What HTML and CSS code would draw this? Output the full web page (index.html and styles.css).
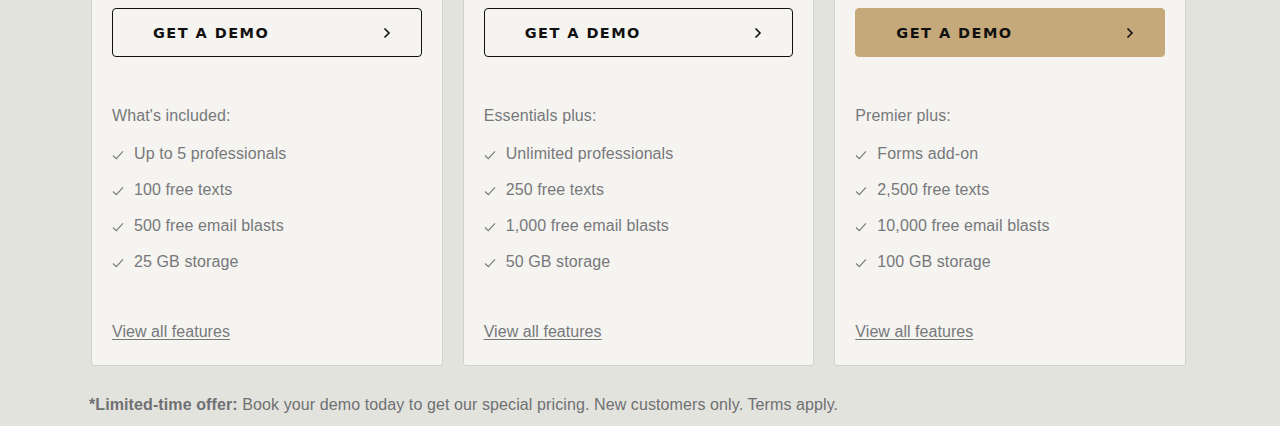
FILE: index.html
```html
<!DOCTYPE html>
<html lang="en">
<head>
<meta charset="utf-8">
<title>Pricing</title>
<link rel="stylesheet" href="styles.css">
</head>
<body>
<main class="page">
  <div class="cards">
    <section class="card">
      <a class="btn" href="#"><span>GET A DEMO</span><svg class="chev" viewBox="0 0 8 12" width="8" height="12"><path d="M1.5 1.5 L6 6 L1.5 10.5" fill="none" stroke="currentColor" stroke-width="1.6"/></svg></a>
      <p class="lead">What's included:</p>
      <ul class="list">
        <li><svg class="check" viewBox="0 0 12 10" width="12" height="10"><path d="M1 5.5 L4.3 8.6 L11 1.4" fill="none" stroke="currentColor" stroke-width="1.1"/></svg>Up to 5 professionals</li>
        <li><svg class="check" viewBox="0 0 12 10" width="12" height="10"><path d="M1 5.5 L4.3 8.6 L11 1.4" fill="none" stroke="currentColor" stroke-width="1.1"/></svg>100 free texts</li>
        <li><svg class="check" viewBox="0 0 12 10" width="12" height="10"><path d="M1 5.5 L4.3 8.6 L11 1.4" fill="none" stroke="currentColor" stroke-width="1.1"/></svg>500 free email blasts</li>
        <li><svg class="check" viewBox="0 0 12 10" width="12" height="10"><path d="M1 5.5 L4.3 8.6 L11 1.4" fill="none" stroke="currentColor" stroke-width="1.1"/></svg>25 GB storage</li>
      </ul>
      <a class="more" href="#">View all features</a>
    </section>
    <section class="card">
      <a class="btn" href="#"><span>GET A DEMO</span><svg class="chev" viewBox="0 0 8 12" width="8" height="12"><path d="M1.5 1.5 L6 6 L1.5 10.5" fill="none" stroke="currentColor" stroke-width="1.6"/></svg></a>
      <p class="lead">Essentials plus:</p>
      <ul class="list">
        <li><svg class="check" viewBox="0 0 12 10" width="12" height="10"><path d="M1 5.5 L4.3 8.6 L11 1.4" fill="none" stroke="currentColor" stroke-width="1.1"/></svg>Unlimited professionals</li>
        <li><svg class="check" viewBox="0 0 12 10" width="12" height="10"><path d="M1 5.5 L4.3 8.6 L11 1.4" fill="none" stroke="currentColor" stroke-width="1.1"/></svg>250 free texts</li>
        <li><svg class="check" viewBox="0 0 12 10" width="12" height="10"><path d="M1 5.5 L4.3 8.6 L11 1.4" fill="none" stroke="currentColor" stroke-width="1.1"/></svg>1,000 free email blasts</li>
        <li><svg class="check" viewBox="0 0 12 10" width="12" height="10"><path d="M1 5.5 L4.3 8.6 L11 1.4" fill="none" stroke="currentColor" stroke-width="1.1"/></svg>50 GB storage</li>
      </ul>
      <a class="more" href="#">View all features</a>
    </section>
    <section class="card">
      <a class="btn btn-gold" href="#"><span>GET A DEMO</span><svg class="chev" viewBox="0 0 8 12" width="8" height="12"><path d="M1.5 1.5 L6 6 L1.5 10.5" fill="none" stroke="currentColor" stroke-width="1.6"/></svg></a>
      <p class="lead">Premier plus:</p>
      <ul class="list">
        <li><svg class="check" viewBox="0 0 12 10" width="12" height="10"><path d="M1 5.5 L4.3 8.6 L11 1.4" fill="none" stroke="currentColor" stroke-width="1.1"/></svg>Forms add-on</li>
        <li><svg class="check" viewBox="0 0 12 10" width="12" height="10"><path d="M1 5.5 L4.3 8.6 L11 1.4" fill="none" stroke="currentColor" stroke-width="1.1"/></svg>2,500 free texts</li>
        <li><svg class="check" viewBox="0 0 12 10" width="12" height="10"><path d="M1 5.5 L4.3 8.6 L11 1.4" fill="none" stroke="currentColor" stroke-width="1.1"/></svg>10,000 free email blasts</li>
        <li><svg class="check" viewBox="0 0 12 10" width="12" height="10"><path d="M1 5.5 L4.3 8.6 L11 1.4" fill="none" stroke="currentColor" stroke-width="1.1"/></svg>100 GB storage</li>
      </ul>
      <a class="more" href="#">View all features</a>
    </section>
  </div>
  <p class="note"><strong>*Limited-time offer:</strong> Book your demo today to get our special pricing. New customers only. Terms apply.</p>
</main>
</body>
</html>
```
FILE: styles.css
```css
* { box-sizing: border-box; }
html, body { margin: 0; padding: 0; }
body {
  background: #e3e3dd;
  font-family: "Liberation Sans", Arial, sans-serif;
  color: #77787b;
  height: 426px;
  overflow: hidden;
}
.page {
  padding: 0 0 0 89px;
}
.cards {
  display: flex;
  gap: 20px;
  width: 1097px;
  margin-top: -12px;
  padding-left: 2px;
}
.card {
  flex: 1 1 0;
  background: #f5f4f0;
  border: 1px solid #d2d2cd;
  border-radius: 0 0 3px 3px;
  padding: 19px 20px 21px 20px;
  display: flex;
  flex-direction: column;
}
.btn {
  display: flex;
  align-items: center;
  justify-content: space-between;
  height: 49px;
  padding: 0 30px 0 40px;
  border: 1px solid #111;
  border-radius: 4px;
  color: #111;
  text-decoration: none;
  font-family: "DejaVu Sans", sans-serif;
  font-weight: 700;
  font-size: 14.5px;
  letter-spacing: 1.45px;
}
.btn-gold {
  background: #c6a97b;
  border-color: #c6a97b;
}
.chev { display: block; }
.lead {
  margin: 47px 0 0 0;
  font-size: 16px;
  line-height: 24px;
  letter-spacing: 0.1px;
}
.list {
  list-style: none;
  margin: 14px 0 0 0;
  padding: 0;
  display: flex;
  flex-direction: column;
  gap: 12px;
}
.list li {
  display: flex;
  align-items: center;
  font-size: 16px;
  line-height: 24px;
  letter-spacing: 0.1px;
}
.check {
  flex: none;
  margin: 2px 10px 0 0;
  color: #77787b;
}
.more {
  margin-top: 46px;
  font-size: 16px;
  line-height: 24px;
  letter-spacing: 0.05px;
  color: #77787b;
  text-decoration: underline;
  text-underline-offset: 2px;
  align-self: flex-start;
}
.note {
  margin: 27px 0 0 0;
  font-size: 16px;
  line-height: 24px;
  letter-spacing: 0.1px;
  color: #6f7073;
}
.note strong { font-weight: 700; }
```
